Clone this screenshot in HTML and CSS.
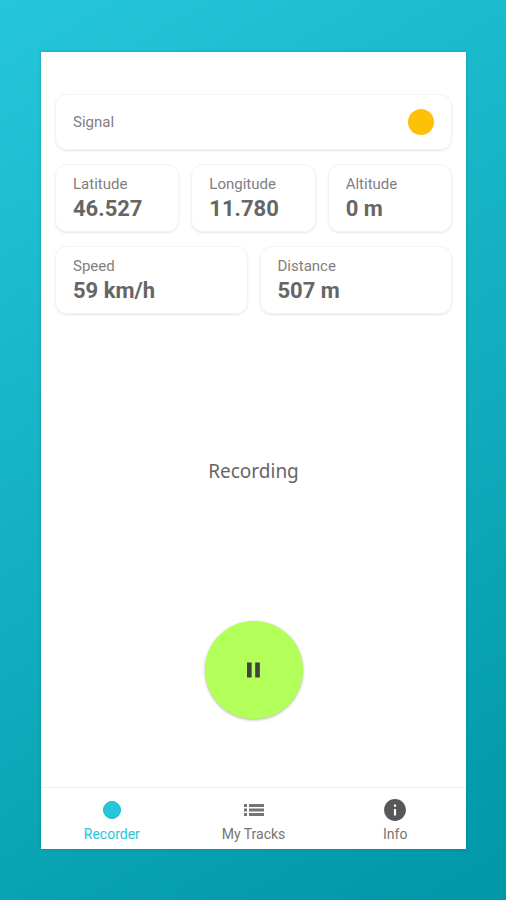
FILE: index.html
```html
<!DOCTYPE html>
<html lang="en">
<head>
    <meta charset="UTF-8">
    <meta name="viewport" content="width=device-width, initial-scale=1.0">
    <title>Recorder</title>
    <link rel="stylesheet" href="styles.css">
</head>
<body>

<div class="app">
    <main class="content">
        <!-- Live values -->
        <div class="row">
            <div class="card signal">
                <span class="label">Signal</span>
                <span class="signal-dot"></span>
            </div>
        </div>
        <div class="row">
            <div class="card">
                <div class="label">Latitude</div>
                <div class="value">46.527</div>
            </div>
            <div class="card">
                <div class="label">Longitude</div>
                <div class="value">11.780</div>
            </div>
            <div class="card">
                <div class="label">Altitude</div>
                <div class="value">0 m</div>
            </div>
        </div>
        <div class="row">
            <div class="card">
                <div class="label">Speed</div>
                <div class="value">59 km/h</div>
            </div>
            <div class="card">
                <div class="label">Distance</div>
                <div class="value">507 m</div>
            </div>
        </div>

        <!-- Recording state -->
        <div class="recording">
            <p class="status">Recording</p>
            <button class="pause" type="button" aria-label="Pause">
                <svg width="28" height="28" viewBox="0 0 24 24" fill="#424242"><path d="M6 18.500h4V5.500H6v13zm7-13v13h4v-13h-4z"/></svg>
            </button>
        </div>
    </main>

    <nav class="tabs">
        <a href="#recorder" class="tab active">
            <svg width="24" height="24" viewBox="0 0 24 24"><circle cx="12" cy="12" r="8.5" fill="#26c6da" stroke="#1fb5ca" stroke-width="1"/></svg>
            <span>Recorder</span>
        </a>
        <a href="#tracks" class="tab">
            <svg width="24" height="24" viewBox="0 0 24 24" fill="#757575"><path d="M2 6h3v3H2zM2 10.500h3v3H2zM2 15h3v3H2zM7 6h15v3H7zM7 10.500h15v3H7zM7 15h15v3H7z"/></svg>
            <span>My Tracks</span>
        </a>
        <a href="#info" class="tab">
            <svg width="26" height="24" viewBox="1 1 22 22" fill="#585858"><path d="M12 2C6.480 2 2 6.480 2 12s4.480 10 10 10 10-4.480 10-10S17.520 2 12 2zm1 15h-2v-6h2v6zm0-8h-2V7h2v2z"/></svg>
            <span>Info</span>
        </a>
    </nav>
</div>

</body>
</html>
```

FILE: styles.css
```css
* {
    box-sizing: border-box;
}

body {
    margin: 0;
    min-height: 100vh;
    padding: 52px 40px 51px 41px;
    display: flex;
    background: linear-gradient(150deg, #26c6da, #0097a7);
    font-family: Roboto, sans-serif;
    color: #666;
}

.app {
    flex: 1;
    display: flex;
    flex-direction: column;
    background-color: #fff;
    box-shadow: 0 0 3px rgba(0, 80, 90, 0.3);
}

.content {
    flex: 1;
    display: flex;
    flex-direction: column;
    gap: 14px;
    padding: 42px 14px 0;
}

.row {
    display: flex;
    gap: 12px;
}

.card {
    flex: 1;
    padding: 9px 17px 7px;
    border: 1px solid #f3f3f3;
    border-radius: 12px;
    box-shadow: 0 1px 2px rgba(0, 0, 0, 0.1);
}

.signal {
    display: flex;
    justify-content: space-between;
    align-items: center;
    padding: 14px 17px;
}

.signal-dot {
    width: 26px;
    height: 26px;
    border-radius: 50%;
    background-color: #ffc107;
}

.label {
    font-size: 15px;
    line-height: 20px;
    color: #808080;
}

.value {
    font-size: 22px;
    line-height: 30px;
    font-weight: bold;
}

.recording {
    flex: 1;
    display: flex;
    flex-direction: column;
    align-items: center;
    justify-content: flex-end;
    gap: 136px;
    padding-bottom: 68px;
}

.status {
    margin: 0;
    font-family: "Noto Sans", sans-serif;
    font-size: 19px;
    line-height: 28px;
}

.pause {
    display: flex;
    align-items: center;
    justify-content: center;
    width: 98px;
    height: 98px;
    padding: 0;
    border: none;
    border-radius: 50%;
    background-color: #b2ff59;
    box-shadow: 0 1px 3px rgba(0, 0, 0, 0.3);
    cursor: pointer;
}

.tabs {
    display: flex;
    border-top: 1px solid #f0f0f0;
}

.tab {
    flex: 1;
    display: flex;
    flex-direction: column;
    align-items: center;
    gap: 3px;
    padding: 10px 0 6px;
    font-size: 14px;
    line-height: 18px;
    color: #757575;
    text-decoration: none;
}

.tab.active {
    color: #26c6da;
}
```
